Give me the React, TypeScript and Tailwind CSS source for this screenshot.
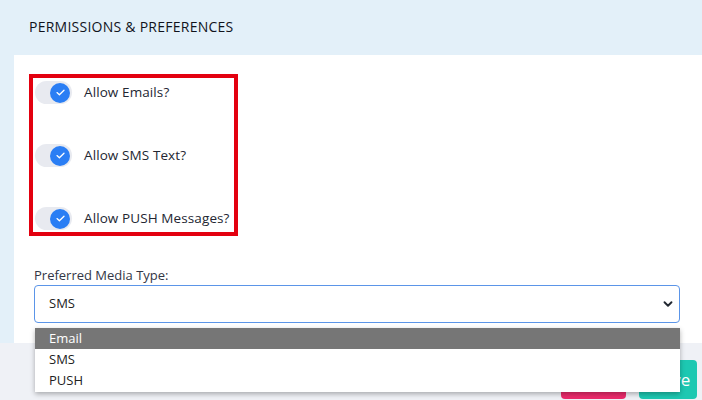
import { ChevronDown } from "lucide-react";

const font = { fontFamily: '"Open Sans", "Liberation Sans", sans-serif' };

function Toggle({ label }: { label: string }) {
  return (
    <div className="flex items-center h-[23px]">
      <div className="relative w-[37px] h-[23px] rounded-full bg-[#e8eaf0]">
        <div className="absolute right-[2px] top-[1.5px] w-[20px] h-[20px] rounded-full bg-[#2a7ef4] flex items-center justify-center">
          <svg width="9" height="7" viewBox="0 0 9 7" fill="none">
            <path d="M1 3.6 L3.4 5.8 L8 1.2" stroke="white" strokeWidth="1.3" strokeLinecap="round" strokeLinejoin="round" />
          </svg>
        </div>
      </div>
      <span className="ml-[12px] text-[13.5px] tracking-[0.1px] text-[#232632]">{label}</span>
    </div>
  );
}

export default function App() {
  const options = ["Email", "SMS", "PUSH"];
  return (
    <div className="w-[702px] h-[400px] overflow-hidden bg-[#eff1f6] text-[#212529]" style={font}>
      <div className="h-[55px] bg-[#e3f0f9] flex items-center pl-[29px] pb-[3px]">
        <h2 className="text-[14px] font-medium text-[#10131c] tracking-[0.25px]">PERMISSIONS &amp; PREFERENCES</h2>
      </div>
      <div className="flex h-[288px]">
        <div className="w-[14px] bg-[#e3f0f9]" />
        <div className="flex-1 bg-white flex flex-col">
          <div className="mt-[19px] ml-[15px] w-[209px] border-4 border-[#e3000f] pl-[2px] pt-[3px] pb-[2px] flex flex-col gap-[40px]">
            <Toggle label="Allow Emails?" />
            <Toggle label="Allow SMS Text?" />
            <Toggle label="Allow PUSH Messages?" />
          </div>
          <label className="mt-[29px] ml-[20px] text-[13px] leading-[20px] text-[#333645]">Preferred Media Type:</label>
          <div className="relative ml-[20px] mr-[22px]">
            <div className="h-[38px] border border-[#5b95e8] rounded-[4px] flex items-center justify-between pl-[14px] pr-[4px]">
              <span className="text-[13px] text-[#222]">SMS</span>
              <ChevronDown size={14} strokeWidth={3.2} className="text-[#222831]" />
            </div>
            <div className="absolute left-[1px] right-0 top-full mt-[5px] pb-[1px] bg-white shadow-[0_2px_5px_rgba(0,0,0,0.3)] z-10">
              {options.map((o, i) => (
                <div
                  key={o}
                  className={
                    i === 0
                      ? "h-[21px] pl-[14px] flex items-center text-[13px] bg-[#767676] text-white"
                      : "h-[21px] pl-[14px] flex items-center text-[13px] text-[#222]"
                  }
                >
                  {o}
                </div>
              ))}
            </div>
          </div>
        </div>
      </div>
      <div className="flex justify-end gap-[13px] pt-[17px] pr-[5px]">
        <button className="w-[65px] h-[39px] rounded-[4px] bg-[#ec2b6c] text-white text-[16px]">Cancel</button>
        <button className="w-[58px] h-[39px] rounded-[4px] bg-[#1dc8b2] text-white text-[17px] pl-[8px]">Save</button>
      </div>
    </div>
  );
}
